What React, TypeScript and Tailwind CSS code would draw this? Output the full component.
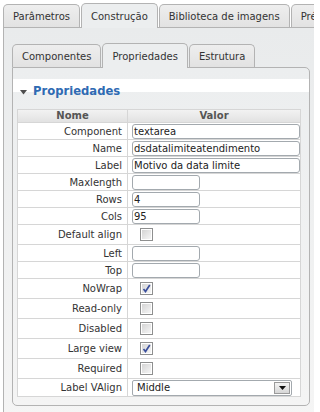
import React from "react";

type Row =
  | { label: string; kind: "text"; value: string; wide: boolean }
  | { label: string; kind: "check"; checked: boolean }
  | { label: string; kind: "select"; value: string };

const ROWS: Row[] = [
  { label: "Component", kind: "text", value: "textarea", wide: true },
  { label: "Name", kind: "text", value: "dsdatalimiteatendimento", wide: true },
  { label: "Label", kind: "text", value: "Motivo da data limite", wide: true },
  { label: "Maxlength", kind: "text", value: "", wide: false },
  { label: "Rows", kind: "text", value: "4", wide: false },
  { label: "Cols", kind: "text", value: "95", wide: false },
  { label: "Default align", kind: "check", checked: false },
  { label: "Left", kind: "text", value: "", wide: false },
  { label: "Top", kind: "text", value: "", wide: false },
  { label: "NoWrap", kind: "check", checked: true },
  { label: "Read-only", kind: "check", checked: false },
  { label: "Disabled", kind: "check", checked: false },
  { label: "Large view", kind: "check", checked: true },
  { label: "Required", kind: "check", checked: false },
  { label: "Label VAlign", kind: "select", value: "Middle" },
];

function Tab({ label, active }: { label: string; active?: boolean }) {
  return (
    <div
      className={`flex items-center px-[9px] border border-b-0 border-[#b3b3b3] rounded-t-[5px] whitespace-nowrap text-[#333] ${
        active
          ? "relative z-10 -mb-px h-[25px] bg-[#eceeef]"
          : "h-[23px] bg-[linear-gradient(#eeeeee,#e2e2e2)]"
      }`}
    >
      {label}
    </div>
  );
}

function Checkbox({ checked }: { checked: boolean }) {
  return (
    <div className="w-[13px] h-[13px] ml-[8px] border border-[#8e8f8f] bg-white p-px">
      <div className="w-full h-full bg-[linear-gradient(135deg,#d4d4d4,#f6f6f6)] flex items-center justify-center">
        {checked && (
          <svg width="9" height="9" viewBox="0 0 9 9">
            <path d="M1.5 5 L3.5 7.5 L7.8 1" fill="none" stroke="#3b4f9c" strokeWidth="1.7" />
          </svg>
        )}
      </div>
    </div>
  );
}

function Value({ row }: { row: Row }) {
  if (row.kind === "check") return <Checkbox checked={row.checked} />;
  if (row.kind === "select")
    return (
      <div className="flex items-center justify-between w-[160px] h-[16px] border border-[#a3a9ae] rounded-[2px] bg-white pl-[4px] pr-px">
        <span className="text-[#222]">{row.value}</span>
        <div className="w-[16px] h-[12px] border border-[#9a9a9a] bg-[linear-gradient(#f4f4f4,#d6d6d6)] flex items-center justify-center">
          <svg width="7" height="4" viewBox="0 0 7 4">
            <path d="M0 0 H7 L3.5 4 Z" fill="#111" />
          </svg>
        </div>
      </div>
    );
  return (
    <div
      className={`h-[15px] border border-[#a3a9ae] rounded-[3px] bg-white px-px leading-[13px] text-[#222] whitespace-nowrap overflow-hidden ${
        row.wide ? "w-[168px]" : "w-[68px]"
      }`}
    >
      {row.value}
    </div>
  );
}

function PropertyRow({ row, last }: { row: Row; last: boolean }) {
  const height = row.kind === "check" ? "h-[20px]" : "h-[17px]";
  return (
    <div className={`grid grid-cols-[110px_1fr] ${height} ${last ? "" : "border-b border-[#d6d6d6]"}`}>
      <div className="flex items-center justify-end pr-[5px] border-r border-[#d6d6d6] text-[#333] whitespace-nowrap">
        {row.label}
      </div>
      <div className="flex items-center pl-[4px]">
        <Value row={row} />
      </div>
    </div>
  );
}

export default function App() {
  return (
    <div className="w-[314px] h-[412px] overflow-hidden bg-white font-['DejaVu_Sans',Verdana,sans-serif] text-[10px] leading-[13px]">
      <div className="flex items-end gap-[1px] pl-[3px] pt-[3px]">
        <Tab label="Parâmetros" />
        <Tab label="Construção" active />
        <Tab label="Biblioteca de imagens" />
        <Tab label="Pré-visualização" />
      </div>

      <div className="ml-[3px] w-[330px] h-[400px] border border-[#b3b3b3] bg-[linear-gradient(#e9ebec,#f5f5f5)] pl-[8px] pt-[15px]">
        <div className="flex items-end gap-[1px]">
          <Tab label="Componentes" />
          <Tab label="Propriedades" active />
          <Tab label="Estrutura" />
        </div>

        <div className="w-[298px] border border-[#b3b3b3] rounded-tr-[5px] rounded-b-[5px] bg-[linear-gradient(#eceeef,#f4f4f4)] pt-[11px] pb-[8px]">
          <div className="h-[30px] bg-[linear-gradient(#ffffff_0,#ffffff_13px,transparent_13px)] pt-[4px] flex items-start">
            <svg width="7" height="5" viewBox="0 0 7 5" className="ml-[7px] mt-[7px]">
              <path d="M0 0 H7 L3.5 4.5 Z" fill="#4d4d4d" />
            </svg>
            <span className="ml-[6px] text-[11.6px] leading-[16px] font-bold text-[#2f6ab3]">Propriedades</span>
          </div>

          <div className="ml-[4px] w-[284px] border border-[#d6d6d6] bg-white">
            <div className="grid grid-cols-[110px_1fr] h-[13px] border-b border-[#d6d6d6] bg-[linear-gradient(#f2f2f2,#e2e2e2)] font-bold text-[#555] leading-[12px]">
              <div className="text-center border-r border-[#d6d6d6]">Nome</div>
              <div className="text-center">Valor</div>
            </div>
            {ROWS.map((row, i) => (
              <PropertyRow key={row.label} row={row} last={i === ROWS.length - 1} />
            ))}
          </div>
        </div>
      </div>
    </div>
  );
}
